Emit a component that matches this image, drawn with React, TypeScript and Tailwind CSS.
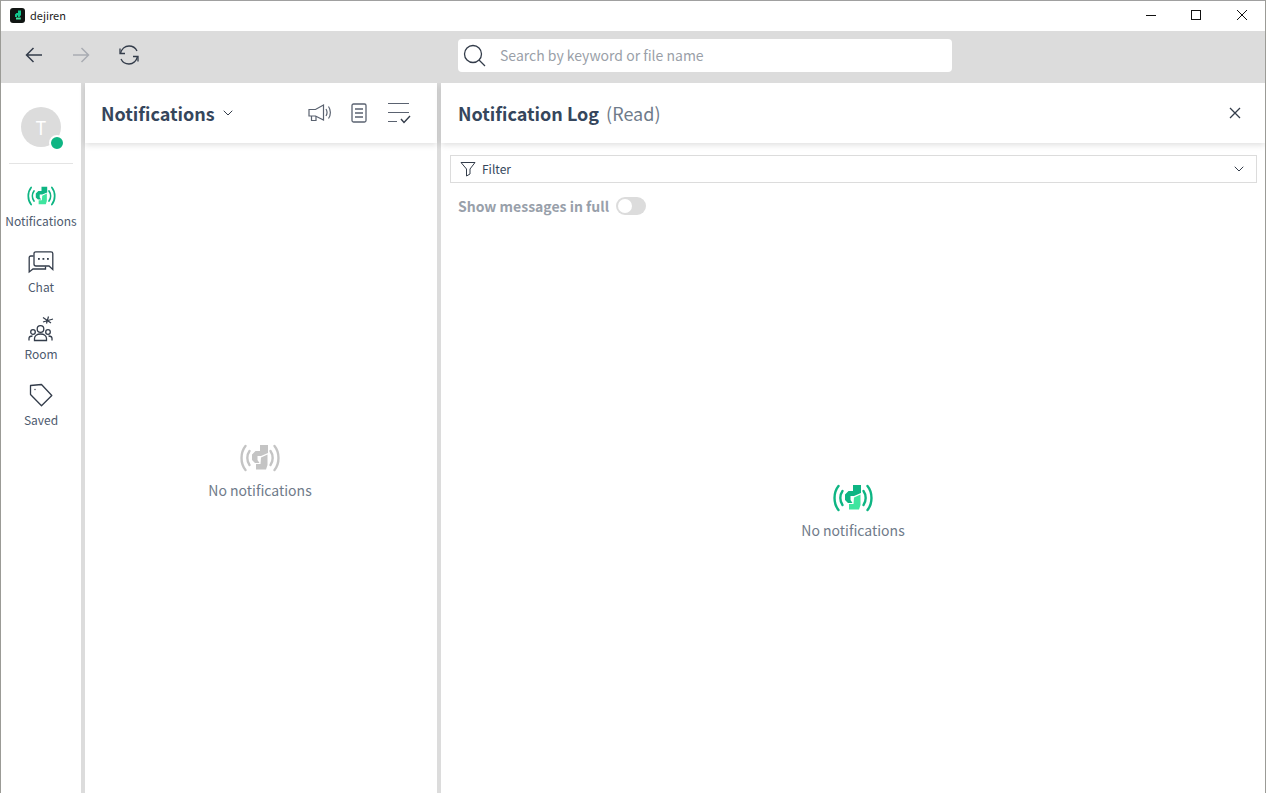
import { ChevronDown } from "lucide-react";

const font = "font-['Noto_Sans_CJK_JP','Noto_Sans',sans-serif]";

const BrandIcon = ({ mono, className }: { mono?: boolean; className?: string }) => {
	const dark = mono ? "#c4c4c4" : "#0eb583";
	const light = mono ? "#c4c4c4" : "#3fe59f";
	return (
		<svg viewBox="0 0 40 28" className={className} fill="none">
			<g stroke={dark} strokeWidth="2.4" strokeLinecap="round">
				<path d="M5.500 2C0.200 8.500 0.200 19.500 5.500 26" />
				<path d="M34.500 2C39.800 8.500 39.800 19.500 34.500 26" />
				<path d="M9.500 7C6.600 11 6.600 17 9.500 21" />
				<path d="M30.500 7C33.400 11 33.400 17 30.500 21" />
			</g>
			<path d="M20 1H28V9L21 12H17.500V16L19.500 19H15L12 16V10.500L15.500 7H20Z" fill={dark} />
			<path d="M21 13.500L27.500 10.500V21L26 25.500H16V20H20.500Z" fill={light} />
		</svg>
	);
};

const RailItem = ({ icon, label }: { icon: React.ReactNode; label: string }) => (
	<div className="flex flex-col items-center">
		<div className="flex h-7 w-full items-center justify-center">{icon}</div>
		<span className="mt-[2px] text-xs leading-[18px] text-[#4d5a6e]">{label}</span>
	</div>
);

const Empty = ({ mono }: { mono?: boolean }) => (
	<div className="flex flex-col items-center">
		<BrandIcon mono={mono} className="h-7 w-10" />
		<span className="mt-[8px] text-sm leading-5 text-[#6f7b8a]">No notifications</span>
	</div>
);

export default function App() {
	return (
		<div className={`flex h-[793px] w-[1266px] flex-col overflow-hidden border-x border-[#9b9b96] bg-white ${font}`}>
			{/* title bar */}
			<div className="flex h-[31px] shrink-0 items-center border-t border-[#a0a0a0] pb-[2px] pl-[9px]">
				<div className="flex h-[15px] w-[15px] items-center justify-center rounded-[3px] bg-[#101513]">
					<svg viewBox="0 0 12 12" className="h-3 w-3">
						<path d="M6 1.500H9V6L7.500 8H6V6.500H5V8L3 8V5.500L4.500 4H6Z" fill="#11c98f" />
						<path d="M4 8.500H8.800V10.500H4Z" fill="#3fe59f" />
					</svg>
				</div>
				<span className="ml-[5px] text-[11px] text-[#1c1c1c]">dejiren</span>
				<div className="ml-auto flex items-center pr-[17px]">
					<svg width="12" height="12" viewBox="0 0 12 12" className="mr-[33px]">
						<path d="M1 6.500H11" stroke="#111" strokeWidth="1" />
					</svg>
					<svg width="12" height="12" viewBox="0 0 12 12" className="mr-[34px]">
						<rect x="1.500" y="1.500" width="9" height="9" fill="none" stroke="#111" strokeWidth="1" />
					</svg>
					<svg width="12" height="12" viewBox="0 0 12 12">
						<path d="M1 1L11 11M11 1L1 11" stroke="#111" strokeWidth="1" />
					</svg>
				</div>
			</div>

			{/* toolbar */}
			<div className="relative flex h-[52px] shrink-0 items-center bg-[#dcdcdc] pb-1 pl-[23px]">
				<svg width="20" height="20" viewBox="0 0 20 20" fill="none" stroke="#333c4a" strokeWidth="1.500">
					<path d="M18 10H2.500M9.500 3L2.500 10L9.500 17" />
				</svg>
				<svg width="20" height="20" viewBox="0 0 20 20" fill="none" stroke="#a9acb2" strokeWidth="1.500" className="ml-[27px]">
					<path d="M2 10H17.500M10.500 3L17.500 10L10.500 17" />
				</svg>
				<svg width="24" height="24" viewBox="0 0 24 24" fill="none" stroke="#333c4a" strokeWidth="1.300" className="ml-[26px]">
					<path d="M3.500 10.500C4.500 6 8 3 12 3C15.500 3 18.500 4.800 20 8" />
					<path d="M20.500 13.500C19.500 18 16 21 12 21C8.500 21 5.500 19.200 4 16" />
					<path d="M3 5.500V10.500H8M21 18.500V13.500H16" />
				</svg>
				<div className="ml-[317px] flex h-[33px] w-[494px] items-center rounded-[4px] bg-white pl-[4px]">
					<svg width="24" height="24" viewBox="0 0 24 24" fill="none" stroke="#333c4a" strokeWidth="1.300">
						<circle cx="11" cy="11" r="8.500" />
						<path d="M17 17L23 23" />
					</svg>
					<span className="ml-[14px] text-sm text-[#9a9fa8]">Search by keyword or file name</span>
				</div>
			</div>

			{/* body */}
			<div className="flex min-h-0 flex-1 gap-1 bg-[#dcdcdc]">
				{/* rail */}
				<div className="flex w-20 shrink-0 flex-col items-center bg-white pt-6">
					<div className="relative flex h-10 w-10 items-center justify-center rounded-full bg-[#dcdcdc] text-lg text-white">
						T
						<div className="absolute -right-[4px] -bottom-[4px] h-[16px] w-[16px] rounded-full border-[2px] border-white bg-[#0eb583]" />
					</div>
					<div className="mt-4 h-px w-16 bg-[#e4e4e4]" />
					<div className="mt-[18px] flex w-full flex-col gap-[18.25px]">
						<RailItem icon={<BrandIcon className="h-5 w-[29px]" />} label="Notifications" />
						<RailItem
							icon={
								<svg width="26" height="24" viewBox="0 0 26 24" fill="none" stroke="#333c4a" strokeWidth="1.300">
									<path d="M6 14V3.500C6 2.500 6.800 1.800 7.800 1.800H23C24 1.800 24.800 2.500 24.800 3.500V19.500L21 16H8C6.800 16 6 15.200 6 14Z" />
									<path d="M5.500 6H2.800C1.800 6 1.200 6.700 1.200 7.500V22L5 19H17.500V16.500" />
									<g fill="#333c4a" stroke="none">
										<rect x="10" y="8" width="1.800" height="1.800" />
										<rect x="14.500" y="8" width="1.800" height="1.800" />
										<rect x="19" y="8" width="1.800" height="1.800" />
									</g>
								</svg>
							}
							label="Chat"
						/>
						<RailItem
							icon={
								<svg width="26" height="26" viewBox="0 0 26 26" fill="none" stroke="#333c4a" strokeWidth="1.300">
									<circle cx="12.500" cy="13" r="3.300" />
									<circle cx="5" cy="16" r="2.300" />
									<circle cx="20" cy="16" r="2.300" />
									<path d="M6.500 24.500V22.500C6.500 20 9 18 12.500 18C16 18 18.500 20 18.500 22.500V24.500Z" />
									<path d="M1 24.500V22.500C1 21 2.500 20 4.500 20M24 24.500V22.500C24 21 22.500 20 20.500 20" />
									<path d="M15 1.500L23 7M20.500 0.500L18.500 7.500M15 6L25 3" strokeWidth="1.200" />
								</svg>
							}
							label="Room"
						/>
						<RailItem
							icon={
								<svg width="24" height="24" viewBox="0 0 24 24" fill="none" stroke="#333c4a" strokeWidth="1.300">
									<path d="M1.500 2.500L12.500 1.500L22.800 12.500L12.500 22.800L1.500 11.500Z" strokeLinejoin="round" />
									<circle cx="6" cy="6.500" r="0.700" fill="#333c4a" stroke="none" />
								</svg>
							}
							label="Saved"
						/>
					</div>
				</div>

				{/* list column */}
				<div className="flex w-[352px] shrink-0 flex-col bg-white">
					<div className="flex h-[60px] shrink-0 items-center pl-4 pr-[26px] shadow-[0_2px_6px_rgba(0,0,0,0.13)]">
						<span className="text-lg font-bold text-[#35465c]">Notifications</span>
						<ChevronDown size={16} strokeWidth={1.500} className="ml-[5px] text-[#333c4a]" />
						<svg width="24" height="22" viewBox="0 0 24 22" fill="none" stroke="#5a6270" strokeWidth="1.200" className="ml-auto">
							<path d="M1 7.500H7.500L15.500 3V18L7.500 14H1Z" />
							<path d="M3.500 14V18.500H8V14" />
							<path d="M18 7C19.200 9 19.200 12 18 14M20.500 4.500C23 8 23 13 20.500 16.500" />
						</svg>
						<svg width="18" height="20" viewBox="0 0 18 20" fill="none" stroke="#5a6270" strokeWidth="1.300" className="ml-[18px]">
							<rect x="2" y="1" width="14" height="18" rx="1.500" />
							<path d="M5 6H13M5 10H13M5 14H13" />
						</svg>
						<svg width="24" height="22" viewBox="0 0 24 22" fill="none" stroke="#5a6270" strokeWidth="1.200" className="ml-[19px]">
							<path d="M1 1.500H22M1 10.500H22M1 19.500H10" />
							<path d="M14 17L17 20.500L23 14" stroke="#333c4a" strokeWidth="1.400" />
						</svg>
					</div>
					<div className="flex flex-1 items-center justify-center pr-[2px] pt-[7px]">
						<Empty mono />
					</div>
				</div>

				{/* log column */}
				<div className="flex min-w-0 flex-1 flex-col bg-white">
					<div className="flex h-[60px] shrink-0 items-center pl-[17px] pr-[24px] shadow-[0_2px_6px_rgba(0,0,0,0.13)]">
						<span className="text-lg font-bold text-[#35465c]">Notification Log</span>
						<span className="ml-[7px] text-lg text-[#6f7b8a]">(Read)</span>
						<svg width="12" height="12" viewBox="0 0 12 12" className="ml-auto" fill="none" stroke="#333c4a" strokeWidth="1.300">
							<path d="M1 1L11 11M11 1L1 11" />
						</svg>
					</div>
					<div className="ml-[9px] mr-2 mt-3 flex h-7 items-center border border-[#dcdcdc] pl-[9px] pr-[9px]">
						<svg width="16" height="16" viewBox="0 0 16 16" fill="none" stroke="#333c4a" strokeWidth="1">
							<path d="M1 1.500H15L10 8V13L6.500 15V8Z" strokeLinejoin="round" />
						</svg>
						<span className="ml-[6px] text-xs text-[#35465c]">Filter</span>
						<ChevronDown size={16} strokeWidth={1.500} className="ml-auto text-[#333c4a]" />
					</div>
					<div className="mt-[14px] flex h-[18px] items-center pl-[17px]">
						<span className="text-sm font-bold text-[#98a0aa]">Show messages in full</span>
						<div className="ml-[7px] flex h-[18px] w-[30px] items-center rounded-full bg-[#dcdcdc] pl-[2px]">
							<div className="h-[14px] w-[14px] rounded-full bg-white" />
						</div>
					</div>
					<div className="flex flex-1 items-center justify-center pt-[16px]">
						<Empty />
					</div>
				</div>
			</div>
		</div>
	);
}
